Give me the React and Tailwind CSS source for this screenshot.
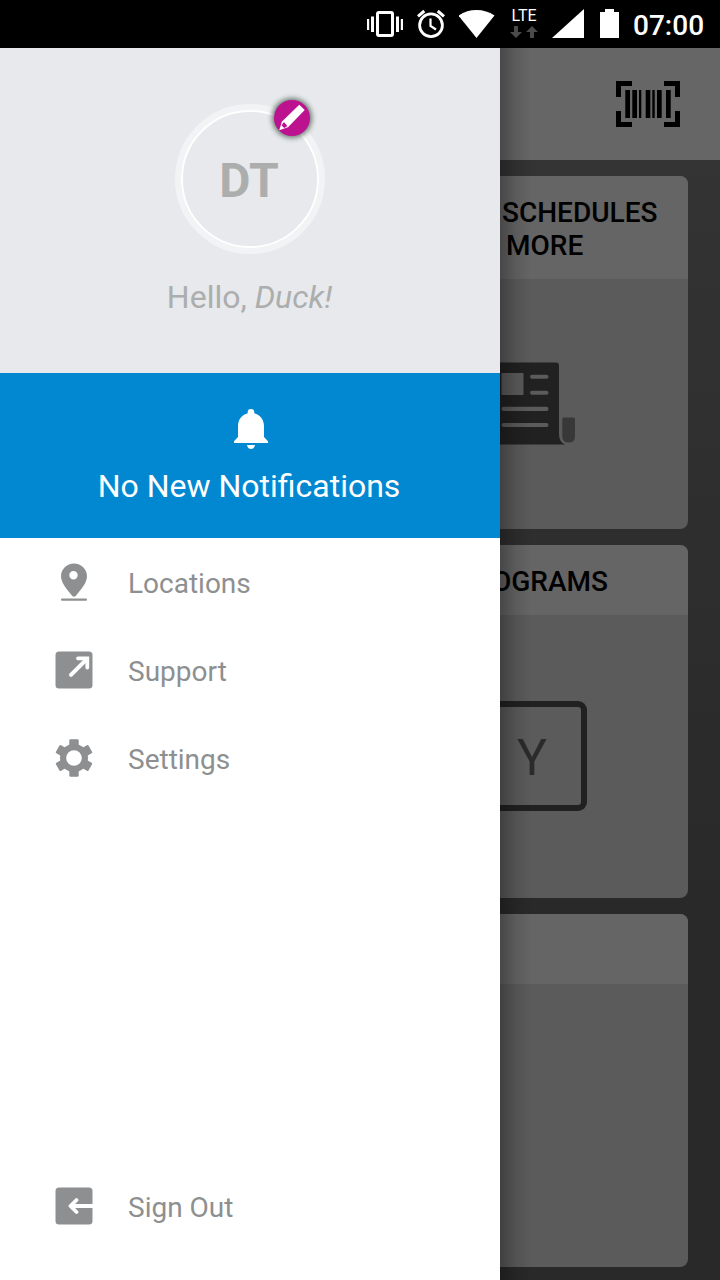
import clsx from "clsx";

function VibrateIcon() {
    return (
        <svg width="36" height="28" viewBox="0 0 36 28" fill="#fff">
            <path d="M0 9h2.200v11H0zM4 6.500h3v15.500H4zM29 6.500h3v15.500h-3zM33.800 9H36v11h-2.200z" />
            <rect x="10.500" y="2.500" width="15" height="23" rx="1.500" fill="none" stroke="#fff" strokeWidth="3" />
        </svg>
    );
}

function AlarmIcon() {
    return (
        <svg width="28" height="29" viewBox="0 0 28 29" fill="none" stroke="#fff" strokeWidth="2.800">
            <circle cx="14" cy="16.200" r="11.400" />
            <path d="M1 7.300 7.300 2M27 7.300 20.700 2" strokeWidth="3" />
            <path d="M13.500 9.500v7.500l5.500 3.500" strokeWidth="2.200" />
        </svg>
    );
}

function StatusBar() {
    return (
        <div className="flex h-12 items-start bg-black pl-[367px] text-white">
            <div className="mt-[10px]"><VibrateIcon /></div>
            <div className="mt-[9px] ml-[14px]"><AlarmIcon /></div>
            <svg className="mt-[10px] ml-[14px]" width="37" height="28" viewBox="0 0 37 28" fill="#fff">
                <path d="M17.500 28-.5 5.500Q7.500 0 17.500 0t18 5.500z" />
            </svg>
            <div className="mt-[8px] ml-[13px] flex w-[30px] flex-col items-center">
                <span className="text-[16px] leading-[16px]">LTE</span>
                <svg className="mt-[2px]" width="28" height="12" viewBox="0 0 28 12" fill="#4a4a4a">
                    <path d="M4 0h4v6h4l-6 6-6-6h4zM20 12h4V6h4l-6-6-6 6h4z" />
                </svg>
            </div>
            <svg className="mt-[9px] ml-[13px]" width="32" height="29" viewBox="0 0 32 29" fill="#fff">
                <path d="M32 0v29H0z" />
            </svg>
            <svg className="mt-[9px] ml-[16px]" width="19" height="29" viewBox="0 0 19 29" fill="#fff">
                <path d="M5 0h9v3h5v26H0V3h5z" />
            </svg>
            <span className="mt-[9px] ml-[14px] text-[28px] leading-[33px] font-medium">07:00</span>
        </div>
    );
}

function PencilBadge() {
    return (
        <div className="absolute top-[-10px] left-[93px] h-9 w-9 rounded-full bg-[#bd1290] shadow-[0_0_5px_2px_rgba(70,85,75,0.75)]">
            <svg width="36" height="36" viewBox="0 0 36 36">
                <path d="M25.300 4.700 30.700 10 14 27.300 5.200 30.300 8 21.500z" fill="#fff" />
                <path d="M9.200 22.700q1.600-.6 2.200 1.200 1.800.1 1.500 2.500l-2.700 1.500-2.600-2.300z" fill="#bd1290" />
            </svg>
        </div>
    );
}

function LocationIcon() {
    return (
        <svg width="38" height="38" viewBox="0 0 38 38" fill="#8d8f90">
            <path
                fillRule="evenodd"
                d="M19 .5C11.800.5 6 6.200 6 13.300 6 19 10.500 25 17.300 33q1.700 1.600 3.400 0C27.500 25 32 19 32 13.300 32 6.200 26.200.5 19 .5zm-.5 7.500a4.200 4.200 0 1 1 0 8.400 4.200 4.200 0 0 1 0-8.400z"
            />
            <rect x="6" y="35.500" width="26" height="2.300" rx="1" />
        </svg>
    );
}

function SupportIcon() {
    return (
        <svg width="38" height="38" viewBox="0 0 38 38">
            <rect x=".5" y=".5" width="37" height="37" rx="3.500" fill="#8d8f90" />
            <g fill="none" stroke="#fff" strokeLinecap="round">
                <path d="M16 23.800 31 8.800" strokeWidth="4" />
                <path d="M23 7.300h9.300v9.200" strokeWidth="3.800" />
            </g>
        </svg>
    );
}

function SettingsIcon() {
    return (
        <svg width="38" height="38" viewBox="0 0 38 38" fill="#8d8f90">
            {[0, 60, 120].map((angle) => (
                <rect key={angle} x="14.300" y=".2" width="9.400" height="37.600" rx="1.200" transform={`rotate(${angle} 19 19)`} />
            ))}
            <circle cx="19" cy="19" r="14" />
            <circle cx="19" cy="19" r="7.800" fill="#fff" />
        </svg>
    );
}

function SignOutIcon() {
    return (
        <svg width="38" height="38" viewBox="0 0 38 38">
            <rect x=".5" y=".5" width="37" height="37" rx="3.500" fill="#8d8f90" />
            <path d="M38 19H16M21.500 13 15.500 19l6 6" fill="none" stroke="#fff" strokeWidth="3.800" strokeLinecap="round" strokeLinejoin="round" />
        </svg>
    );
}

function MenuItem({ icon, label }) {
    return (
        <button className="flex h-22 w-full items-center gap-[35px] pl-[55px] text-left text-[28px] text-[#8d8f90]">
            {icon}
            <span className="mt-[3px] leading-[34px]">{label}</span>
        </button>
    );
}

function Drawer() {
    return (
        <aside className="flex w-[500px] shrink-0 flex-col bg-white">
            <div className="flex h-[325px] flex-col items-center bg-[#e7e9ec] pt-14">
                <div className="relative h-[150px] w-[150px] rounded-full border-[6px] border-[#f2f3f5]">
                    <div className="flex h-full w-full items-center justify-center rounded-full border-2 border-white pt-[4px] pr-[2px] text-[48px] font-bold text-[#acaeae]">
                        DT
                    </div>
                    <PencilBadge />
                </div>
                <p className="mt-[24px] pr-[1px] text-[32px] leading-[38px] text-[#acaeae]">
                    Hello, <em>Duck!</em>
                </p>
            </div>

            <div className="flex h-[165px] flex-col items-center bg-[#0288d1] pt-9 text-white">
                <svg className="ml-[2px]" width="34" height="40" viewBox="0 0 34 40" fill="#fff">
                    <path d="M17 0a3.300 3.300 0 0 1 3.300 3.300v.9C26 5.800 30 10.500 30 17v11l4 4.200V34H0v-1.800L4 28V17C4 10.500 8 5.800 13.700 4.200v-.9A3.300 3.300 0 0 1 17 0zM13 36h8q-.8 4-4 4t-4-4z" />
                </svg>
                <p className="mt-[18px] pr-[2px] text-[32px] leading-[38px]">No New Notifications</p>
            </div>

            <nav className="flex flex-1 flex-col pb-[30px]">
                <MenuItem icon={<LocationIcon />} label="Locations" />
                <MenuItem icon={<SupportIcon />} label="Support" />
                <MenuItem icon={<SettingsIcon />} label="Settings" />
                <div className="mt-auto">
                    <MenuItem icon={<SignOutIcon />} label="Sign Out" />
                </div>
            </nav>
        </aside>
    );
}

function BarcodeIcon() {
    return (
        <svg width="64" height="46" viewBox="0 0 64 46" fill="#000">
            <path d="M2.500 16V2.500H16M48 2.500h13.500V16M61.500 30v13.500H48M16 43.500H2.500V30" fill="none" stroke="#000" strokeWidth="5" />
            <path d="M9.300 9h4.700v28H9.300zM16.300 9H21v28h-4.700zM23 9h2.300v28H23zM29.700 9h4.600v28h-4.600zM36.300 9h2.400v28h-2.400zM41 9h4.700v28H41zM50 9h4.700v28H50z" />
        </svg>
    );
}

function NewsIcon() {
    return (
        <svg width="76" height="84" viewBox="0 0 76 84">
            <path d="M0 .5h56q3 0 3 3V72q0 8 6 10.500H0z" fill="#212121" />
            <path d="M62.300 57q0-1.500 1.500-1.500h9.700q1.500 0 1.500 1.500v17.500q0 6-6.300 6t-6.400-6z" fill="#383838" />
            <g fill="#5b5b5b">
                <rect x="1.500" y="11" width="22" height="22" rx="1" />
                <rect x="30" y="12.700" width="18.500" height="4" rx="2" />
                <rect x="30" y="28.700" width="18.500" height="4" rx="2" />
                <rect x="1.500" y="44.700" width="47" height="4.200" rx="2" />
                <rect x="1.500" y="61" width="47" height="4" rx="2" />
            </g>
        </svg>
    );
}

function Card({ title, tall, children }) {
    return (
        <section className="h-[353px] shrink-0 overflow-hidden rounded-r-lg bg-[#5b5b5b]">
            <header className={clsx("bg-[#656565] pt-5 text-[28px] leading-[33px] font-medium text-black", tall ? "h-[103px]" : "h-[70px]")}>
                {title}
            </header>
            {children}
        </section>
    );
}

function Home() {
    return (
        <main className="relative flex flex-1 flex-col overflow-hidden bg-linear-to-b from-[#353535] to-[#292929] to-70%">
            <div className="flex h-28 shrink-0 items-center justify-end bg-[#666] pr-10">
                <BarcodeIcon />
            </div>
            <div className="flex flex-col gap-4 pt-4 pr-8">
                <Card
                    tall
                    title={
                        <div className="flex flex-col items-start">
                            <span className="pl-[2px]">SCHEDULES</span>
                            <span className="pl-[6px]">MORE</span>
                        </div>
                    }
                >
                    <div className="pt-[83px]">
                        <NewsIcon />
                    </div>
                </Card>
                <Card title={<div className="flex justify-end pr-20">PROGRAMS</div>}>
                    <div className="mt-[86px] flex h-[110px] w-[87px] items-center justify-end rounded-r-[9px] border-y-[6px] border-r-[6px] border-[#212121] pt-[5px] pr-[34px] text-[50px] text-[#2b2b2b]">
                        Y
                    </div>
                </Card>
                <Card />
            </div>
            {/* shadow cast by the open drawer */}
            <div className="pointer-events-none absolute inset-y-0 left-0 w-8 bg-linear-to-r from-black/30 via-black/10 to-transparent" />
        </main>
    );
}

function App() {
    return (
        <div className="flex h-[1280px] w-[720px] flex-col overflow-hidden font-[Roboto,sans-serif]">
            <StatusBar />
            <div className="flex min-h-0 flex-1">
                <Drawer />
                <Home />
            </div>
        </div>
    );
}

export default App;
